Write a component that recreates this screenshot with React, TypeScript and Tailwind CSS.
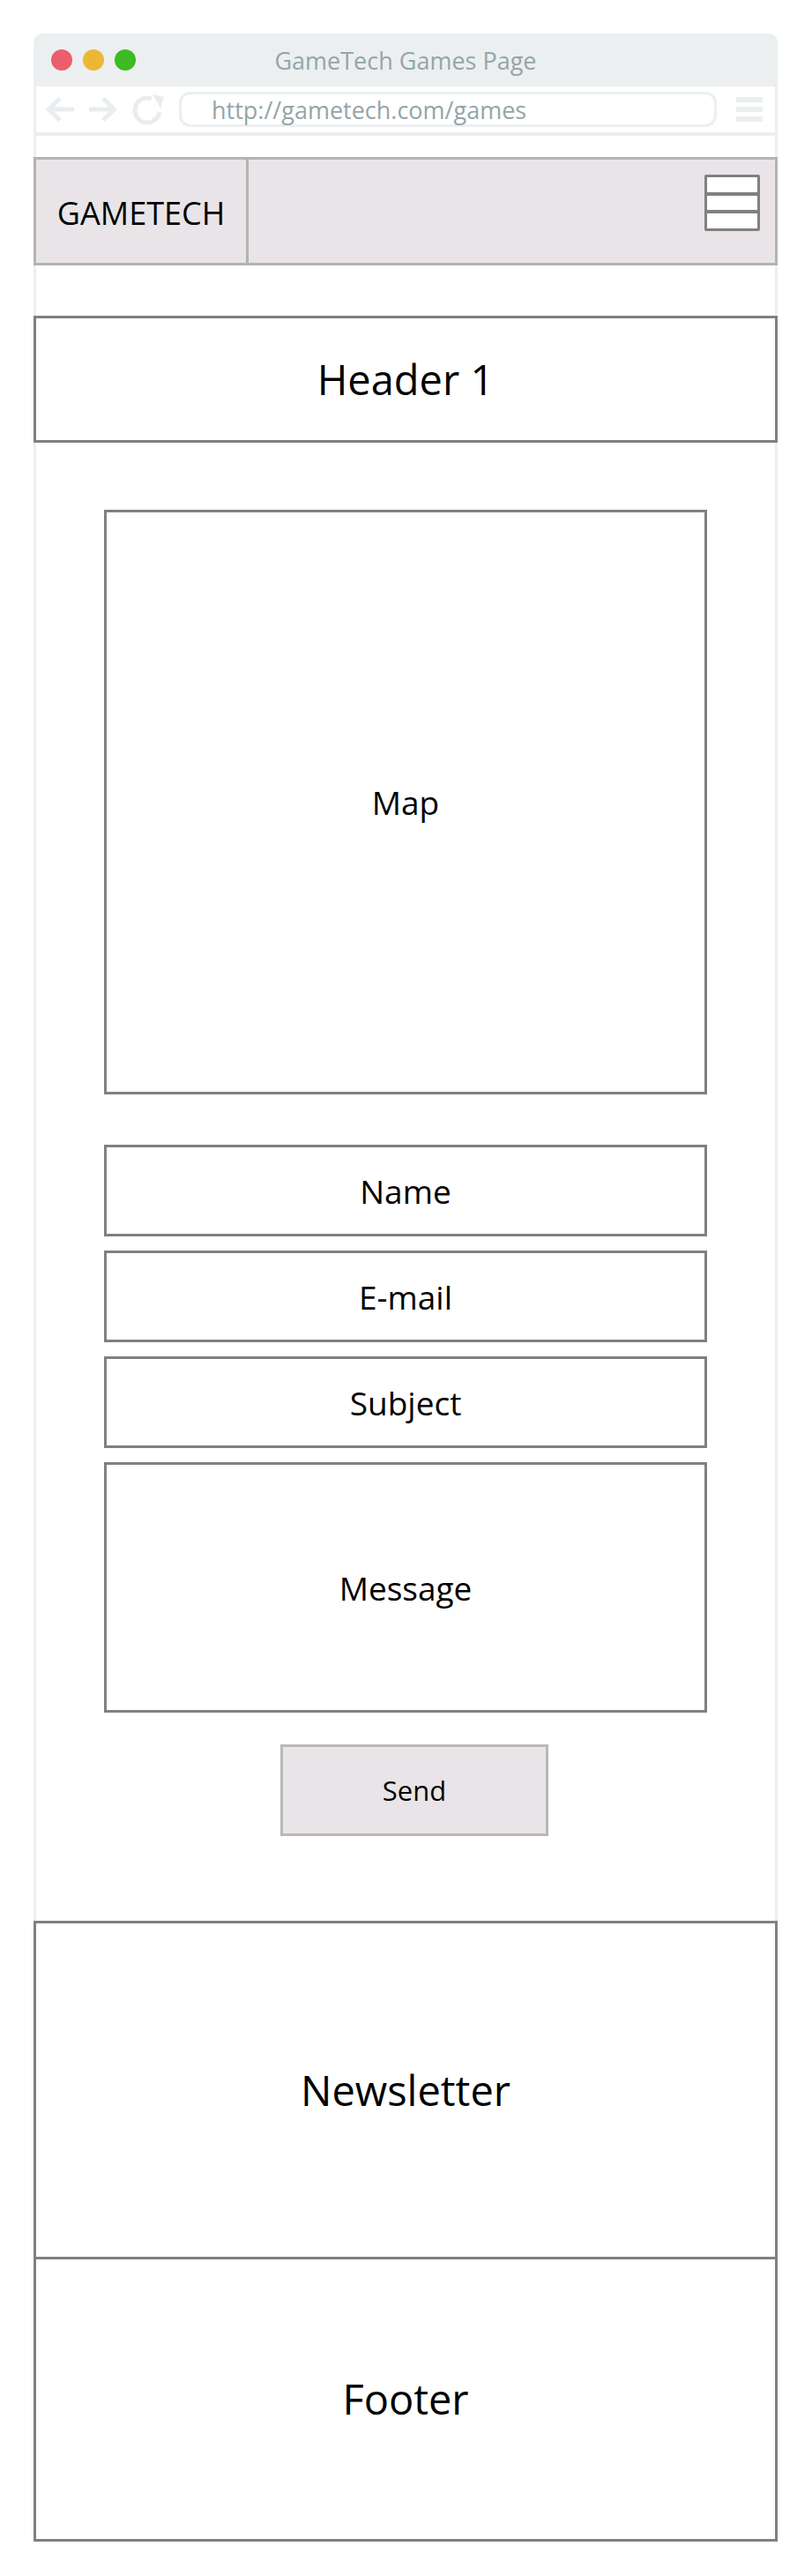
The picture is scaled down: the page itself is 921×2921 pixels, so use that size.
import React from "react";

const fields = ["Name", "E-mail", "Subject"];

function BackArrow({ flip = false }: { flip?: boolean }) {
  return (
    <svg width="34" height="34" viewBox="0 0 34 34" className={flip ? "-scale-x-100" : ""}>
      <path d="M33 17 H5 M17 4.5 L4.5 17 L17 29.5" fill="none" stroke="#e9edef" strokeWidth="5" />
    </svg>
  );
}

function Reload() {
  return (
    <svg width="37" height="36" viewBox="0 0 37 36">
      <path d="M31.8 21.4 A14 14 0 1 1 22.8 5.8" fill="none" stroke="#e9edef" strokeWidth="5" />
      <polygon points="24,1 37,4 33,17" fill="#e9edef" />
    </svg>
  );
}

export default function App() {
  return (
    <div className="min-h-[2921px] bg-white pt-[38px] font-['Open_Sans',sans-serif] text-black">
      <div className="ml-[38px] w-[844px]">
        {/* Title bar */}
        <div className="grid h-[60px] grid-cols-[1fr_auto_1fr] items-center rounded-t-[10px] bg-[#eceff0] px-[20px]">
          <div className="flex items-center gap-[12px]">
            <span className="h-[24px] w-[24px] rounded-full bg-[#eb5f6c]" />
            <span className="h-[24px] w-[24px] rounded-full bg-[#ecb734]" />
            <span className="h-[24px] w-[24px] rounded-full bg-[#3dbb20]" />
          </div>
          <span className="text-[27px] leading-none text-[#95a5a6]">GameTech Games Page</span>
          <div />
        </div>

        <div className="border-x-[3px] border-[#eceff0] pb-[96px]">
          {/* Toolbar */}
          <div className="flex h-[52px] items-center pl-[10px]">
            <BackArrow />
            <div className="ml-[15px]">
              <BackArrow flip />
            </div>
            <div className="ml-[15px]">
              <Reload />
            </div>
            <div className="ml-[17px] flex h-[40px] w-[610px] items-center rounded-[13px] border-[3px] border-[#eceff0] pl-[34px] text-[27px] leading-none text-[#95a5a6]">
              http://gametech.com/games
            </div>
            <div className="ml-[22px] flex w-[30px] flex-col gap-[5px]">
              <span className="h-[6px] bg-[#eceff0]" />
              <span className="h-[6px] bg-[#eceff0]" />
              <span className="h-[6px] bg-[#eceff0]" />
            </div>
          </div>
          <div className="h-[4px] bg-[#eceff0]" />

          {/* Nav */}
          <div className="-mx-[3px] mt-[24px] flex h-[123px] border-[3px] border-[#b3b3b3] bg-[#e8e4e8]">
            <div className="flex w-[241px] items-center justify-center border-r-[3px] border-[#b3b3b3] pt-[4px] text-[36px] leading-none">
              GAMETECH
            </div>
            <div className="flex flex-1 justify-end pr-[17px] pt-[17px]">
              <div className="flex h-[64px] w-[63px] flex-col divide-y-[4px] divide-[#808080] rounded-[2px] border-[3px] border-[#808080] bg-white">
                <span className="flex-1" />
                <span className="flex-1" />
                <span className="flex-1" />
              </div>
            </div>
          </div>

          {/* Header */}
          <div className="-mx-[3px] mt-[57px] flex h-[144px] items-center justify-center border-[3px] border-[#808080] text-[47px] leading-none">
            Header 1
          </div>

          {/* Map */}
          <div className="mx-auto mt-[76px] flex h-[663px] w-[684px] items-center justify-center border-[3px] border-[#808080] text-[37px] leading-none">
            Map
          </div>

          {/* Contact form */}
          <div className="mx-auto mt-[57px] flex w-[684px] flex-col gap-[16px]">
            {fields.map((f) => (
              <div key={f} className="flex h-[104px] items-center justify-center border-[3px] border-[#808080] text-[37px] leading-none">
                {f}
              </div>
            ))}
            <div className="flex h-[284px] items-center justify-center border-[3px] border-[#808080] text-[37px] leading-none">
              Message
            </div>
          </div>

          <button className="ml-[277px] mt-[36px] flex h-[104px] w-[304px] items-center justify-center border-[3px] border-[#b8b8b8] bg-[#e8e4e8] text-[31px] leading-none">
            Send
          </button>
        </div>

        {/* Newsletter + footer */}
        <div className="flex h-[384px] items-center justify-center border-[3px] border-[#808080] text-[47px] leading-none">
          Newsletter
        </div>
        <div className="flex h-[320px] items-center justify-center border-x-[3px] border-b-[3px] border-[#808080] text-[47px] leading-none">
          Footer
        </div>
      </div>
    </div>
  );
}
